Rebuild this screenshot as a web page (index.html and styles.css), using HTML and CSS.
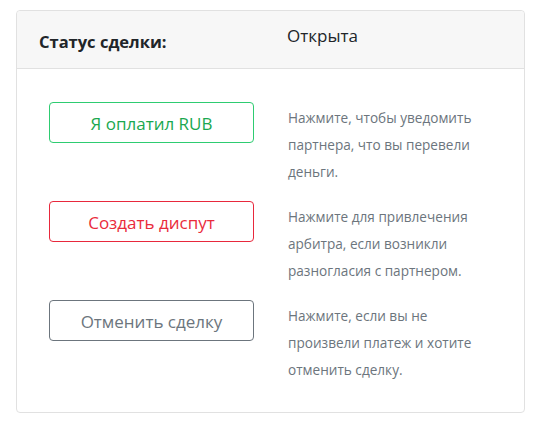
FILE: index.html
```html
<!DOCTYPE html>
<html lang="ru">
<head>
<meta charset="utf-8">
<link rel="stylesheet" href="styles.css">
</head>
<body>
<div class="card">
  <div class="card-header">
    <div class="label">Статус сделки:</div>
    <div class="value">Открыта</div>
  </div>
  <div class="card-body">
    <div class="row">
      <button class="btn btn-green">Я оплатил RUB</button>
      <p class="desc">Нажмите, чтобы уведомить партнера, что вы перевели деньги.</p>
    </div>
    <div class="row">
      <button class="btn btn-red">Создать диспут</button>
      <p class="desc">Нажмите для привлечения арбитра, если возникли разногласия с партнером.</p>
    </div>
    <div class="row">
      <button class="btn btn-gray">Отменить сделку</button>
      <p class="desc">Нажмите, если вы не произвели платеж и хотите отменить сделку.</p>
    </div>
  </div>
</div>
</body>
</html>
```
FILE: styles.css
```css
* { box-sizing: border-box; }
html, body { background: #ffffff; }
body {
  margin: 0;
  padding: 10px 10px 0 16px;
  font-family: "Open Sans", "Noto Sans", sans-serif;
  color: #212529;
}
.card {
  width: 509px;
  border: 1px solid #e1e1e1;
  border-radius: 4px;
  background: #fff;
}
.card-header {
  height: 58px;
  background: #f7f7f7;
  border-bottom: 1px solid #e1e1e1;
  border-radius: 4px 4px 0 0;
  display: flex;
  align-items: flex-start;
  padding-left: 22px;
}
.label {
  width: 248px;
  font-weight: 700;
  font-size: 16.5px;
  line-height: 22px;
  margin-top: 20px;
  color: #212529;
}
.value {
  font-size: 17px;
  line-height: 22px;
  margin-top: 14px;
  color: #212529;
}
.card-body {
  padding: 33px 20px 29px 32px;
  display: flex;
  flex-direction: column;
  gap: 16px;
}
.row {
  display: flex;
  align-items: flex-start;
}
.btn {
  width: 205px;
  height: 41px;
  flex: none;
  background: #fff;
  border: 1px solid;
  border-radius: 4px;
  font-family: "Open Sans", "Noto Sans", sans-serif;
  font-size: 17px;
  line-height: 22px;
  padding: 2px 0 0 0;
  margin-right: 34px;
}
.btn-green { border-color: #2ecc71; color: #1aa84f; }
.btn-red { border-color: #e8283c; color: #ea2b3b; }
.btn-gray { border-color: #6c757d; color: #6c757d; }
.desc {
  margin: 2px 0 0 0;
  width: 195px;
  font-size: 13.6px;
  line-height: 27px;
  color: #6c757d;
}
```
